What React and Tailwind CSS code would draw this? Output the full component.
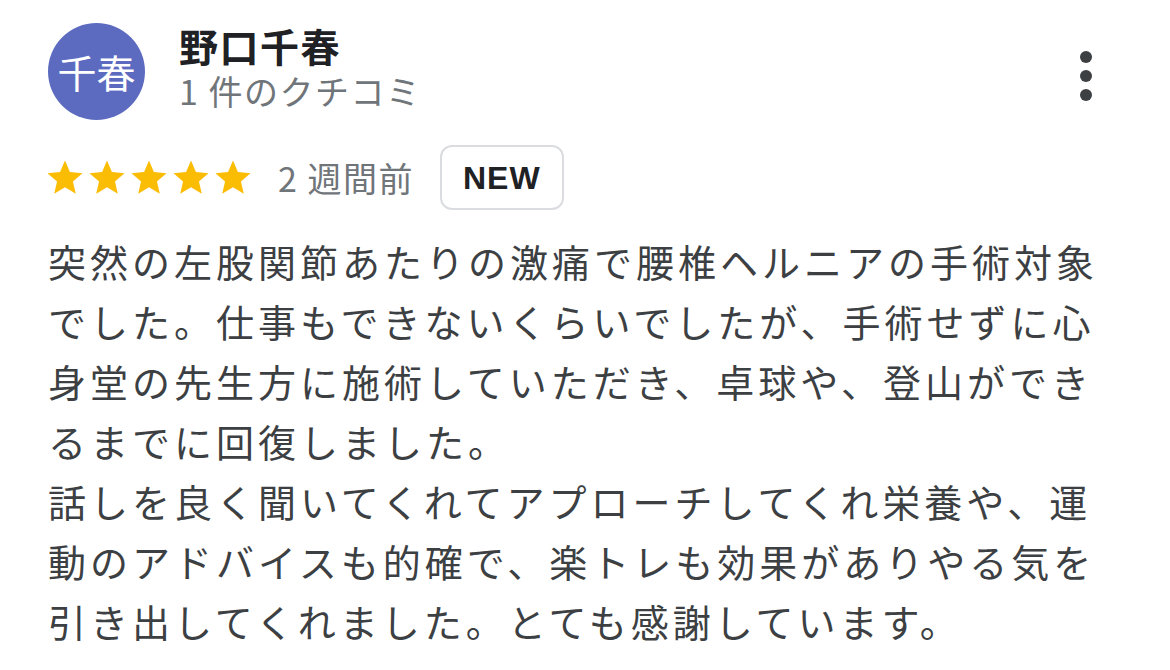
import React from 'react';

const STAR = 'M12 17.27L18.18 21l-1.64-7.03L22 9.24l-7.19-.61L12 2 9.19 8.63 2 9.24l5.46 4.73L5.82 21z';

const BODY = [
  '突然の左股関節あたりの激痛で腰椎ヘルニアの手術対象でした。仕事もできないくらいでしたが、手術せずに心身堂の先生方に施術していただき、卓球や、登山ができるまでに回復しました。',
  '話しを良く聞いてくれてアプローチしてくれ栄養や、運動のアドバイスも的確で、楽トレも効果がありやる気を引き出してくれました。とても感謝しています。',
];

function Stars({ count = 5 }) {
  return (
    <div className="flex ml-[-4px]">
      {Array.from({ length: count }).map((_, i) => (
        <svg key={i} viewBox="0 0 24 24" className="w-[42px] h-[42px]" fill="#fbbc04">
          <path d={STAR} />
        </svg>
      ))}
    </div>
  );
}

export default function App() {
  return (
    <div
      className="w-[1170px] h-[670px] bg-white px-[48px] pt-[23px] overflow-hidden"
      style={{ fontFamily: '"Noto Sans CJK JP", "Noto Sans", sans-serif' }}
    >
      {/* header */}
      <div className="flex items-start">
        <div className="w-[97px] h-[97px] rounded-full bg-[#5c6bc0] flex items-center justify-center text-white text-[39px] leading-none shrink-0">
          千春
        </div>
        <div className="ml-[34px] mt-[-2px] flex-1">
          <div className="text-[39px] leading-[48px] font-bold tracking-[1.5px] text-[#202124]">野口千春</div>
          <div className="mt-[2px] text-[34px] leading-[40px] tracking-[1.5px] text-[#70757a]">1 件のクチコミ</div>
        </div>
        <div className="mt-[28px] mr-[26px] flex flex-col gap-[7px] items-center w-[20px]">
          <span className="w-[12px] h-[12px] rounded-full bg-[#3c4043]" />
          <span className="w-[12px] h-[12px] rounded-full bg-[#3c4043]" />
          <span className="w-[12px] h-[12px] rounded-full bg-[#3c4043]" />
        </div>
      </div>

      {/* rating row */}
      <div className="mt-[25px] flex items-center">
        <Stars />
        <span className="ml-[24px] text-[34px] leading-none tracking-[1.5px] text-[#70757a]">2 週間前</span>
        <span
          className="ml-[26px] h-[65px] px-[21px] flex items-center rounded-[12px] border-2 border-[#dadce0] text-[32px] font-bold tracking-[1px] text-[#202124]"
          style={{ fontFamily: '"Liberation Sans", Arial, sans-serif' }}
        >
          NEW
        </span>
      </div>

      {/* review body */}
      <div className="mt-[21px] w-[1060px] text-[38px] leading-[60px] tracking-[4px] text-[#3c4043]">
        {BODY.map((p, i) => (
          <p key={i}>{p}</p>
        ))}
      </div>
    </div>
  );
}
